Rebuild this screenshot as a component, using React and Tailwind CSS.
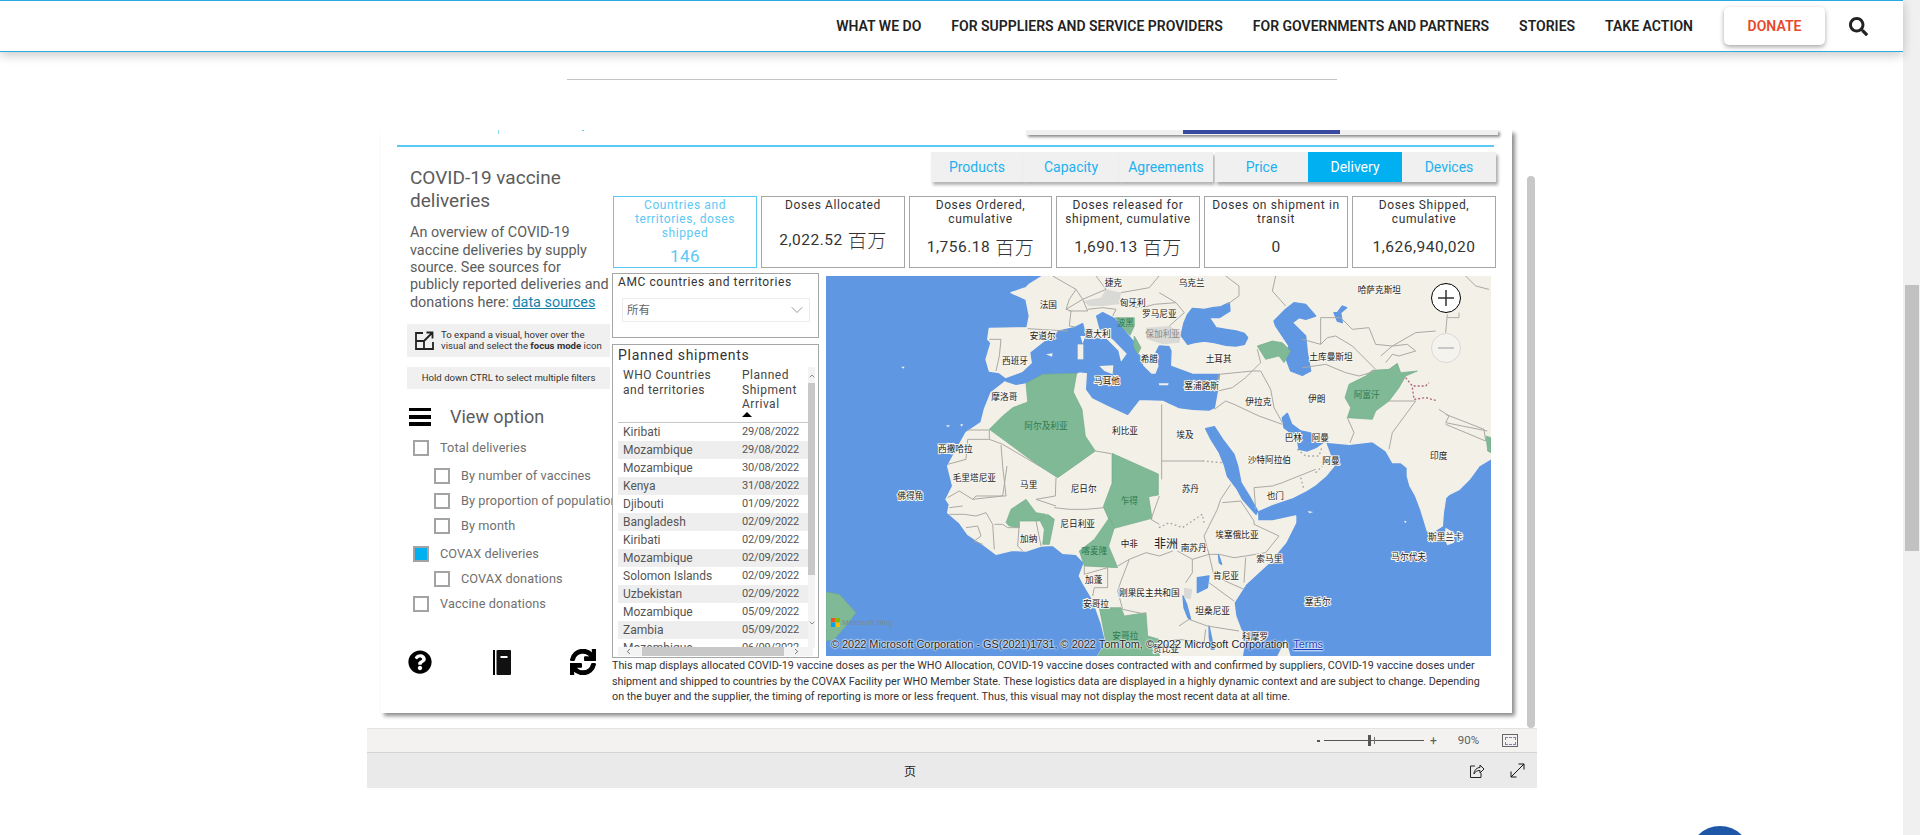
import React from 'react';
import { ChevronDown, ChevronUp, ChevronLeft, ChevronRight } from 'lucide-react';
import { FaSearch, FaQuestionCircle, FaSync } from 'react-icons/fa';

const navItems = [
  'WHAT WE DO',
  'FOR SUPPLIERS AND SERVICE PROVIDERS',
  'FOR GOVERNMENTS AND PARTNERS',
  'STORIES',
  'TAKE ACTION',
];

const shipments = [
  ['Kiribati', '29/08/2022'],
  ['Mozambique', '29/08/2022'],
  ['Mozambique', '30/08/2022'],
  ['Kenya', '31/08/2022'],
  ['Djibouti', '01/09/2022'],
  ['Bangladesh', '02/09/2022'],
  ['Kiribati', '02/09/2022'],
  ['Mozambique', '02/09/2022'],
  ['Solomon Islands', '02/09/2022'],
  ['Uzbekistan', '02/09/2022'],
  ['Mozambique', '05/09/2022'],
  ['Zambia', '05/09/2022'],
  ['Mozambique', '06/09/2022'],
];

// map traced at 3x, viewBox is 3 times the 665x380 map box
const land = '650,0 2000,0 2000,545 1959,570 1930,610 1900,640 1870,655 1859,665 1852,710 1849,750 1825,765 1804,765 1795,735 1784,700 1769,660 1752,630 1744,600 1744,575 1725,560 1700,560 1680,525 1640,497 1570,505 1498,498 1510,530 1524,570 1499,600 1470,625 1439,645 1399,665 1339,685 1294,705 1295,735 1340,735 1409,720 1409,740 1379,800 1329,860 1259,925 1224,980 1229,1020 1244,1060 1259,1080 1249,1140 815,1140 840,1100 825,1040 800,970 770,920 760,900 775,860 750,835 710,832 680,808 645,810 600,825 560,823 510,835 470,805 425,775 400,740 365,710 370,685 360,670 380,630 370,590 365,570 395,515 420,470 465,440 475,400 495,350 540,315 540,305 520,290 490,285 480,250 495,200 485,190 490,157 603,155 610,120 600,70 555,50 600,35 610,25';
const water = [
  '535,310 590,290 620,262 615,230 660,195 700,165 745,155 770,143 778,175 800,188 840,190 875,225 884,262 905,233 865,192 822,158 812,120 830,110 865,128 900,170 925,200 935,235 945,240 950,270 975,295 990,295 1000,270 990,230 1000,210 1029,212 1035,225 1033,270 1100,295 1180,295 1175,340 1165,395 1150,402 1100,400 1060,395 1010,372 940,370 905,415 850,390 800,365 782,340 785,290 760,287 750,292 650,295 600,320 570,325 540,315',
  '1074,140 1085,115 1099,97 1135,100 1160,95 1185,92 1210,80 1212,105 1180,125 1150,125 1170,155 1200,160 1230,165 1255,172 1265,185 1255,205 1230,210 1200,208 1165,200 1135,195 1105,200 1085,205 1065,178',
  '1344,135 1379,100 1404,80 1439,85 1469,120 1439,130 1419,125 1399,140 1439,180 1444,230 1454,285 1429,298 1394,285 1377,240 1389,210 1369,180 1349,150',
  '1524,110 1534,135 1549,140 1544,110 1562,95 1549,90 1534,110',
  '1139,458 1165,452 1190,490 1224,535 1235,570 1245,620 1270,660 1295,705 1290,715 1250,670 1234,640 1204,600 1196,570 1180,530 1155,490',
  '1369,425 1384,412 1397,445 1424,465 1449,470 1477,478 1495,497 1469,515 1444,525 1419,520 1414,490 1394,470 1374,455',
  '1114,905 1149,900 1144,935 1114,950',
  '1177,835 1187,865 1180,860',
  '1071,960 1082,985 1094,1030 1086,1025 1074,995',
  '1149,1050 1164,1120 1156,1120 1150,1085',
];
const islands = [
  '755,205 772,205 772,250 755,250',
  '763,180 778,180 770,203',
  '820,270 862,268 860,295 835,285',
  '660,235 680,232 678,242',
  '998,322 1028,322 1026,328 1000,328',
  '1078,320 1106,320 1098,334 1082,330',
  '1859,755 1884,770 1884,800 1864,808 1854,785',
  '1354,1140 1379,1090 1394,1140',
  '225,272 236,272 232,278',
  '360,448 372,448 366,454',
  '403,445 412,445 406,452',
  '1445,705 1462,708 1450,712',
  '1734,735 1742,735 1738,742',
];
const green = [
  '600,322 650,295 752,292 742,348 768,400 778,480 808,525 745,570 695,605 640,570 490,460 530,420 560,395 605,378',
  '858,532 997,594 997,657 968,662 978,727 865,757 845,722 832,692 858,622',
  '850,725 805,790 760,825 775,870 875,875 848,810 865,755',
  '540,740 555,700 600,670 630,710 660,715 640,735 580,735 580,755 550,750',
  '640,730 665,715 685,730 670,805 650,805 655,760',
  '868,125 925,125 925,150 912,178 890,155',
  '925,180 945,215 935,235 922,210',
  '1294,210 1339,195 1369,200 1394,225 1374,260 1359,240 1319,250',
  '1557,365 1569,325 1619,300 1639,283 1689,280 1714,262 1724,290 1774,285 1739,300 1719,335 1689,375 1649,405 1639,430 1564,425 1574,395',
  '820,995 885,995 895,1020 960,1010 965,1080 999,1090 1000,1140 815,1140 840,1100',
  '0,948 40,955 90,1010 60,1050 25,1090 0,1095',
  '1980,480 1995,485 1995,530 1985,525',
];
const grey = [
  '770,75 825,65 840,40 885,50 880,85 830,90 790,90',
  '960,155 1030,150 1066,170 1060,200 1010,205 965,190',
  '1074,935 1099,940 1094,970 1074,965',
];
const borders = [
  '490,190 525,190 520,240 510,285',
  '605,158 725,165',
  '680,0 750,40 730,70 720,100 735,105 730,150 745,152',
  '750,40 770,70 840,40 810,0',
  '720,100 770,70 785,105 730,105',
  '785,100 830,95 870,100 860,120',
  '885,50 970,35 999,0',
  '885,90 950,95 985,85 1050,80 1075,110 1030,150',
  '1000,50 1050,80',
  '1199,0 1239,30 1239,60 1204,85',
  '1349,0 1339,45 1379,90',
  '1179,295 1279,285 1304,260 1294,220',
  '1175,345 1219,335 1259,305 1279,285 1304,285 1334,340 1344,395 1369,440',
  '1165,400 1199,375 1224,385 1299,420 1369,445',
  '1429,275 1499,265 1559,290 1599,300 1649,285',
  '1484,205 1484,125 1544,125 1579,160 1629,155 1649,205 1699,210 1769,170 1829,165',
  '1429,190 1484,205 1504,185 1529,180 1579,210 1649,280',
  '1864,115 1859,170',
  '1864,125 1899,125 1899,110',
  '1919,0 1949,30 1989,40',
  '1664,240 1699,210 1744,205 1769,225 1719,240 1699,235 1679,260',
  '1564,425 1584,470 1572,500',
  '1689,375 1769,375 1699,470 1689,520',
  '1839,400 1869,420 1859,440 1984,465',
  '1859,415 1974,460 1979,495 1859,445',
  '425,462 490,462 490,490 425,490 420,550 365,565',
  '490,490 530,505 640,570',
  '525,507 530,570 540,660 450,660 440,670',
  '690,605 688,660 630,670',
  '1007,385 1007,610',
  '1007,555 1130,555',
  '808,525 856,533',
  '1000,660 975,730 1000,745',
  '1189,680 1244,675 1284,735 1284,745 1359,780 1319,830 1259,840 1224,845 1179,835 1149,835 1099,850 1054,825',
  '1214,625 1184,670 1174,700 1134,780 1149,835',
  '1149,835 1164,900 1254,940',
  '1259,845 1254,920',
  '1099,850 1099,890 1079,920',
  '1149,920 1224,975',
  '1059,1050 1089,1030 1144,1050 1239,1065',
  '999,1100 1059,1090 1134,1100 1139,1060',
  '910,850 885,915 875,945 890,1000 960,1015',
  '875,870 910,850 960,830 1000,840 1040,825',
  '775,870 775,895 845,875 845,935 805,935 800,960',
  '685,695 730,700 780,700 835,695',
  '365,665 400,645 440,670 530,660 543,570',
  '370,695 410,690',
  '370,715 415,715 450,720 480,710 500,745 505,820',
  '505,745 530,745 545,755 580,755',
  '580,740 575,810 590,825',
  '630,735 645,810',
  '420,755 455,750 465,780 445,795 470,805',
  '690,690 630,670',
  '1284,635 1339,630 1369,620 1469,580',
  '1284,635 1289,700',
  '1179,295 1175,320',
];
const dotted = [
  '1130,555 1190,560',
  '999,755 1029,740 1069,755 1129,715 1134,740',
  '1414,520 1439,540 1479,540 1489,510',
  '1469,590 1489,570',
  '1424,605 1434,640',
];
const redDotted = ['1739,305 1759,330 1799,330 1809,320', '1759,335 1764,370 1800,365 1835,375'];

const labels = [
  ['捷克', 862, 18], ['法国', 667, 85], ['匈牙利', 920, 77], ['罗马尼亚', 1000, 110], ['安道尔', 650, 177],
  ['意大利', 815, 170], ['西班牙', 567, 252], ['希腊', 970, 247], ['马耳他', 843, 312], ['摩洛哥', 535, 360],
  ['利比亚', 897, 462], ['西撒哈拉', 388, 517], ['乌克兰', 1097, 18], ['哈萨克斯坦', 1660, 40], ['土耳其', 1178, 247],
  ['土库曼斯坦', 1515, 240], ['塞浦路斯', 1127, 328], ['伊拉克', 1297, 375], ['伊朗', 1472, 365], ['埃及', 1077, 473],
  ['巴林', 1402, 483], ['阿曼', 1483, 483], ['沙特阿拉伯', 1330, 548], ['阿曼', 1515, 553], ['印度', 1838, 538],
  ['毛里塔尼亚', 445, 603], ['马里', 608, 623], ['尼日尔', 773, 635], ['佛得角', 253, 657], ['尼日利亚', 755, 742],
  ['加纳', 608, 785], ['中非', 910, 802], ['加蓬', 803, 910], ['刚果民主共和国', 970, 948], ['安哥拉', 810, 980],
  ['苏丹', 1093, 635], ['也门', 1348, 657], ['埃塞俄比亚', 1233, 775], ['南苏丹', 1103, 812], ['索马里', 1330, 845],
  ['斯里兰卡', 1858, 780], ['马尔代夫', 1748, 840], ['肯尼亚', 1200, 898], ['塞舌尔', 1475, 975], ['坦桑尼亚', 1160, 1002],
  ['科摩罗', 1287, 1080], ['赞比亚', 1020, 1115],
];
const greenLabels = [
  ['波黑', 898, 138], ['阿尔及利亚', 660, 447], ['阿富汗', 1622, 353], ['乍得', 910, 672], ['喀麦隆', 805, 823], ['安哥拉', 898, 1077],
];

const WorldMap = () => (
  <svg viewBox="0 0 1995 1140" className="absolute inset-0 w-full h-full" preserveAspectRatio="none">
    <rect width="1995" height="1140" fill="#5f97e2" />
    <polygon points={land} fill="#f3f0e8" stroke="#f3f0e8" strokeWidth="4" strokeLinejoin="round" />
    {water.map((p, i) => <polygon key={i} points={p} fill="#5f97e2" stroke="#5f97e2" strokeWidth="4" strokeLinejoin="round" />)}
    {islands.map((p, i) => <polygon key={i} points={p} fill="#f3f0e8" />)}
    {grey.map((p, i) => <polygon key={i} points={p} fill="#d9d9d6" />)}
    {green.map((p, i) => <polygon key={i} points={p} fill="#7fb995" stroke="#72ab89" strokeWidth="2" strokeLinejoin="round" />)}
    {borders.map((p, i) => <polyline key={i} points={p} fill="none" stroke="#aaa9a3" strokeWidth="3" strokeLinejoin="round" />)}
    {dotted.map((p, i) => <polyline key={i} points={p} fill="none" stroke="#a3a29c" strokeWidth="4" strokeDasharray="5 8" />)}
    {redDotted.map((p, i) => <polyline key={i} points={p} fill="none" stroke="#b4667a" strokeWidth="4" strokeDasharray="6 6" />)}
    <g fontFamily="'Noto Sans CJK SC', sans-serif" fontSize="26" textAnchor="middle" dominantBaseline="central">
      {labels.map(([t, x, y], i) => (
        <text key={i} x={x} y={y} fill="#222" stroke="#f7f5ef" strokeWidth="6" paintOrder="stroke">{t}</text>
      ))}
      {greenLabels.map(([t, x, y], i) => (
        <text key={i} x={x} y={y} fill="#2f7a52">{t}</text>
      ))}
      <text x="1020" y="798" fontSize="36" fill="#222" stroke="#f7f5ef" strokeWidth="6" paintOrder="stroke">非洲</text>
      <text x="1010" y="170" fill="#8a8a8a">保加利亚</text>
    </g>
    <g>
      <rect x="15" y="1026" width="13" height="13" fill="#f25022" />
      <rect x="29" y="1026" width="13" height="13" fill="#7fba00" />
      <rect x="15" y="1040" width="13" height="13" fill="#00a4ef" />
      <rect x="29" y="1040" width="13" height="13" fill="#ffb900" />
      <text x="48" y="1040" fontSize="24" fill="#7f8a90" dominantBaseline="central" fontFamily="'Liberation Sans', sans-serif">Microsoft Bing</text>
    </g>
  </svg>
);

const Checkbox = ({ checked }) => (
  <span className={`w-[16px] h-[16px] shrink-0 border-2 border-[#a3a3a3] ${checked ? 'bg-[#00b0f0]' : 'bg-white'}`} />
);

const OptionRow = ({ label, checked, className }) => (
  <div className={`h-[20px] flex items-center whitespace-nowrap ${className}`}>
    <Checkbox checked={checked} />
    <span className="ml-[11px] text-[12.7px] leading-[20px] tracking-[0.1px] text-[#707070]">{label}</span>
  </div>
);

const KpiCard = ({ title, value, unit, active, className }) => (
  <div className={`h-[72px] border flex flex-col items-center px-[4px] pt-[1px] text-center ${active ? 'border-[#5bc8f5] text-[#5bc8f5]' : 'border-[#a6a6a6] text-[#333]'} ${className}`}>
    <div className="text-[12px] leading-[14px] tracking-[0.6px]">{title}</div>
    <div className="flex-1 pt-[2px] flex items-center justify-center text-[15.5px] tracking-[0.5px]">
      {value}
      {unit && <span className="ml-[5px] text-[19px] font-['Noto_Sans_CJK_SC',sans-serif] font-light">{unit}</span>}
    </div>
  </div>
);

const TabButton = ({ label, active, className }) => (
  <div className={`h-full flex items-center justify-center text-[14px] ${active ? 'bg-[#00b0f0] text-white' : 'bg-[#f0f0f0] text-[#1eb1ee]'} ${className}`}>
    {label}
  </div>
);

const App = () => {
  return (
    <div className="relative w-full h-[835px] overflow-hidden bg-white flex font-['Roboto',sans-serif]">
      <div className="flex-1 min-w-0 flex flex-col">
        {/* site header */}
        <header className="relative z-10 h-[52px] shrink-0 bg-white border-t border-b border-[#29abe2] shadow-[0_3px_10px_rgba(0,0,0,0.22)] flex items-center justify-end pr-[35px]">
          <nav className="flex items-center gap-[30px] text-[14px] font-semibold text-[#222]">
            {navItems.map((item) => <span key={item} className="whitespace-nowrap">{item}</span>)}
          </nav>
          <div className="ml-[31px] w-[101px] h-[38px] rounded-[5px] bg-white shadow-[0_2px_5px_rgba(0,0,0,0.35)] flex items-center justify-center text-[14px] font-semibold text-[#e8472a]">
            DONATE
          </div>
          <FaSearch className="ml-[24px] text-[#222]" size={19} />
        </header>

        <div className="mt-[27px] ml-[567px] w-[770px] h-px shrink-0 bg-[#c4c4c4]" />

        {/* embedded report */}
        <div className="mt-[50px] ml-[367px] w-[1170px] shrink-0">
          <div className="h-[598px] flex overflow-hidden">
            <div className="ml-[14px] w-[1131px] h-[583px] bg-white shadow-[3px_3px_4px_rgba(0,0,0,0.45)] flex flex-col">
              {/* clipped strip of the section above */}
              <div className="h-[5px] shrink-0 flex">
                <div className="ml-[117px] w-px h-[4px] bg-[#8fd8f7]" />
                <div className="ml-[83px] w-[2px] h-[1px] bg-[#5bc8f5]" />
                <div className="ml-[442px] w-[472px] h-[5px] bg-[#f0f0f0] shadow-[2px_2px_3px_rgba(0,0,0,0.45)] flex">
                  <div className="ml-[157px] w-[157px] h-[4px] bg-[#3949a0]" />
                </div>
              </div>
              <div className="mt-[10px] ml-[16px] w-[1097px] h-[2px] shrink-0 bg-[#5bc8f5]" />

              <div className="flex-1 flex min-h-0">
                {/* left column */}
                <div className="ml-[26px] w-[205px] shrink-0 overflow-hidden">
                  <div className="mt-[20px] pl-[3px] text-[19px] leading-[22.7px] text-[#5c5c5c]">
                    COVID-19 vaccine<br />deliveries
                  </div>
                  <div className="mt-[12px] pl-[3px] text-[14.4px] leading-[17.3px] text-[#5c5c5c] whitespace-nowrap">
                    An overview of COVID-19<br />
                    vaccine deliveries by supply<br />
                    source. See sources for<br />
                    publicly reported deliveries and<br />
                    donations here: <span className="text-[#1582ab] underline">data sources</span>
                  </div>
                  <div className="mt-[13px] w-[203px] h-[33px] bg-[#f0f0f0] flex items-center pl-[8px]">
                    <svg width="19" height="19" viewBox="0 0 19 19" fill="none" stroke="#222" strokeWidth="1.8">
                      <path d="M8 2H1v16h17v-7" />
                      <path d="M1 10h8v8" />
                      <path d="M9 10 L17.5 1.5M11.5 1.5h6v6" />
                    </svg>
                    <div className="ml-[7px] text-[9.6px] leading-[11.5px] text-[#333] whitespace-nowrap">
                      To expand a visual, hover over the<br />
                      visual and select the <b>focus mode</b> icon
                    </div>
                  </div>
                  <div className="mt-[10px] w-[203px] h-[22px] bg-[#f0f0f0] flex items-center justify-center text-[9.65px] text-[#333] whitespace-nowrap">
                    Hold down CTRL to select multiple filters
                  </div>

                  <div className="mt-[18px] h-[20px] flex items-center">
                    <div className="ml-[2px] w-[22px] h-[18px] flex flex-col justify-between">
                      <div className="h-[3.5px] bg-black" />
                      <div className="h-[3.5px] bg-black" />
                      <div className="h-[3.5px] bg-black" />
                    </div>
                    <span className="ml-[19px] text-[18px] leading-[21px] text-[#5c5c5c]">View option</span>
                  </div>

                  <OptionRow label="Total deliveries" className="mt-[11px] ml-[6px]" />
                  <OptionRow label="By number of vaccines" className="mt-[8px] ml-[27px]" />
                  <OptionRow label="By proportion of population" className="mt-[5px] ml-[27px]" />
                  <OptionRow label="By month" className="mt-[5px] ml-[27px]" />
                  <OptionRow label="COVAX deliveries" checked className="mt-[8px] ml-[6px]" />
                  <OptionRow label="COVAX donations" className="mt-[5px] ml-[27px]" />
                  <OptionRow label="Vaccine donations" className="mt-[5px] ml-[6px]" />

                  <div className="mt-[36px] h-[25px] flex items-center">
                    <FaQuestionCircle className="ml-[1px] text-black" size={24} />
                    <svg className="ml-[61px]" width="18" height="25" viewBox="0 0 18 25">
                      <rect x="0" y="0" width="2" height="25" fill="#000" />
                      <rect x="3.5" y="0" width="14.5" height="25" rx="1" fill="#111" />
                      <rect x="7.5" y="6" width="7" height="2" fill="#fff" />
                    </svg>
                    <FaSync className="ml-[59px] text-black" size={26} stroke="#000" strokeWidth={25} />
                  </div>
                </div>

                {/* right column */}
                <div className="w-[884px] shrink-0">
                  <div className="mt-[5px] ml-[319px] h-[30px] flex">
                    <TabButton label="Products" className="w-[92px] shadow-[2px_3px_3px_rgba(0,0,0,0.3)]" />
                    <TabButton label="Capacity" className="w-[96px] shadow-[2px_3px_3px_rgba(0,0,0,0.3)]" />
                    <TabButton label="Agreements" className="w-[94px] shadow-[2px_3px_3px_rgba(0,0,0,0.3)]" />
                    <div className="ml-[2px] flex h-full shadow-[2px_3px_3px_rgba(0,0,0,0.35)]">
                      <TabButton label="Price" className="w-[93px]" />
                      <TabButton label="Delivery" active className="w-[94px]" />
                      <TabButton label="Devices" className="w-[94px]" />
                    </div>
                  </div>

                  <div className="mt-[14px] ml-[1px] flex gap-[4px]">
                    <KpiCard active title={<>Countries and territories, doses shipped</>} value={<span className="mt-[2px] text-[17px]">146</span>} className="w-[144px]" />
                    <KpiCard title="Doses Allocated" value="2,022.52" unit="百万" className="w-[144px]" />
                    <KpiCard title="Doses Ordered, cumulative" value="1,756.18" unit="百万" className="w-[143px]" />
                    <KpiCard title="Doses released for shipment, cumulative" value="1,690.13" unit="百万" className="w-[144px]" />
                    <KpiCard title="Doses on shipment in transit" value="0" className="w-[144px]" />
                    <KpiCard title="Doses Shipped, cumulative" value="1,626,940,020" className="w-[144px]" />
                  </div>

                  <div className="mt-[4px] h-[386px] flex">
                    <div className="w-[207px] shrink-0 flex flex-col">
                      {/* AMC slicer */}
                      <div className="mt-[1px] h-[65px] border border-[#a6a6a6] px-[5px] pt-[1px]">
                        <div className="text-[12px] leading-[15px] tracking-[0.6px] text-[#333]">AMC countries and territories</div>
                        <div className="mt-[8px] ml-[4px] w-[188px] h-[24px] border border-[#ececec] flex items-center justify-between pl-[4px] pr-[2px]">
                          <span className="text-[11.5px] text-[#666] font-['Noto_Sans_CJK_SC',sans-serif]">所有</span>
                          <ChevronDown size={20} strokeWidth={0.9} className="text-[#777]" />
                        </div>
                      </div>
                      {/* planned shipments table */}
                      <div className="relative mt-[6px] h-[314px] border border-[#a6a6a6] overflow-hidden">
                        <div className="pl-[5px] pt-[1px] text-[14px] leading-[18px] tracking-[0.7px] text-[#333]">Planned shipments</div>
                        <div className="ml-[5px] mt-[2px] pt-[2px] w-[190px] h-[57px] border-b border-[#c8c8c8] flex text-[12px] leading-[14.5px] tracking-[0.5px] text-[#444]">
                          <div className="pl-[5px] w-[124px]">WHO Countries<br />and territories</div>
                          <div>
                            Planned<br />Shipment<br />Arrival
                            <div className="w-0 h-0 border-x-[5px] border-x-transparent border-b-[5px] border-b-black" />
                          </div>
                        </div>
                        <div className="ml-[5px] w-[190px] h-[225px] overflow-hidden">
                          {shipments.map(([country, date], i) => (
                            <div key={i} className={`h-[18px] flex items-center text-[#555] whitespace-nowrap ${i % 2 === 1 ? 'bg-[#eeeeee]' : ''}`}>
                              <span className="pl-[5px] w-[124px] text-[12px]">{country}</span>
                              <span className="text-[11px] tracking-[-0.15px]">{date}</span>
                            </div>
                          ))}
                        </div>
                        {/* scroll bars */}
                        <div className="absolute left-[195px] top-[22px] w-[7px] h-[281px] bg-[#f3f3f3] flex flex-col items-center">
                          <ChevronUp size={8} className="mt-[5px] text-[#555]" />
                          <div className="mt-[3px] w-full h-[192px] bg-[#c8c8c8]" />
                          <ChevronDown size={8} className="mt-[44px] text-[#555]" />
                        </div>
                        <div className="absolute left-[5px] top-[302px] w-[195px] h-[9px] bg-[#f3f3f3] flex items-center">
                          <ChevronLeft size={9} className="ml-[6px] text-[#444]" />
                          <div className="ml-[9px] w-[142px] h-full bg-[#c8c8c8]" />
                          <ChevronRight size={9} className="ml-[8px] text-[#444]" />
                        </div>
                      </div>
                    </div>

                    {/* map */}
                    <div className="relative mt-[4px] ml-[7px] w-[665px] h-[380px] overflow-hidden">
                      <WorldMap />
                      <div className="absolute left-[5px] bottom-[4px] flex items-center whitespace-nowrap text-[10.9px] leading-[16px] font-['Liberation_Sans',sans-serif] text-[#222] [text-shadow:0_0_2px_#fff,0_0_2px_#fff,0_0_2px_#fff]">
                        © 2022 Microsoft Corporation - GS(2021)1731, © 2022 TomTom, © 2022 Microsoft Corporation
                        <span className="ml-[5px] text-[#1b3fbf] underline">Terms</span>
                      </div>
                      <div className="absolute left-[605px] top-[7px] w-[30px] h-[30px] rounded-full bg-white border border-black flex items-center justify-center">
                        <svg width="16" height="16" viewBox="0 0 16 16" stroke="#333" strokeWidth="1.5"><path d="M8 0v16M0 8h16" /></svg>
                      </div>
                      <div className="absolute left-[605px] top-[57px] w-[30px] h-[30px] rounded-full bg-[#f4f3ee] border border-[#d8d8d8] flex items-center justify-center">
                        <svg width="16" height="2" viewBox="0 0 16 2" stroke="#c8c8c8" strokeWidth="2"><path d="M0 1h16" /></svg>
                      </div>
                    </div>
                  </div>

                  <div className="text-[10.75px] leading-[15.5px] text-[#333] whitespace-nowrap">
                    This map displays allocated COVID-19 vaccine doses as per the WHO Allocation, COVID-19 vaccine doses contracted with and confirmed by suppliers, COVID-19 vaccine doses under<br />
                    shipment and shipped to countries by the COVAX Facility per WHO Member State. These logistics data are displayed in a highly dynamic context and are subject to change. Depending<br />
                    on the buyer and the supplier, the timing of reporting is more or less frequent. Thus, this visual may not display the most recent data at all time.
                  </div>
                </div>
              </div>
            </div>
            <div className="ml-[15px] mt-[46px] w-[8px] h-[552px] rounded-t-[4px] rounded-b-[4px] bg-[#c8c8c8]" />
          </div>

          {/* zoom bar */}
          <div className="h-[24px] bg-[#f3f2f1] border-t border-[#e2e2e2] flex items-center text-[#605e5c]">
            <div className="ml-[950px] w-[3px] h-[2px] bg-[#555]" />
            <div className="relative ml-[4px] w-[100px] h-px bg-[#555]">
              <div className="absolute left-[44px] top-[-5px] w-[3px] h-[11px] bg-[#555]" />
              <div className="absolute left-[50px] top-[-3px] w-px h-[7px] bg-[#777]" />
            </div>
            <span className="ml-[6px] text-[12px]">+</span>
            <span className="ml-[21px] text-[11.5px]">90%</span>
            <div className="ml-[23px] w-[16px] h-[13px] border border-[#666] flex items-center justify-center">
              <div className="w-[11px] h-[8px] border border-dashed border-[#8080b0]" />
            </div>
          </div>
          {/* page bar */}
          <div className="h-[36px] bg-[#eaeaea] border-t border-[#d4d4d4] flex items-center">
            <span className="ml-[537px] w-[14px] text-[12px] text-[#222] font-['Noto_Sans_CJK_SC',sans-serif]">页</span>
            <svg className="ml-[551px]" width="16" height="16" viewBox="0 0 16 16" fill="none" stroke="#222" strokeWidth="1">
              <path d="M6 3H1.5v11.5H12V10" />
              <path d="M5 11c0-4 3-6.5 6-6.5V2l4 4-4 4V7.5c-3 0-5 1-6 3.5z" />
            </svg>
            <svg className="ml-[25px]" width="15" height="15" viewBox="0 0 15 15" fill="none" stroke="#111" strokeWidth="1">
              <path d="M1 14 14 1M8.5 1H14v5.5M1 8.5V14h5.5" />
            </svg>
          </div>
        </div>
      </div>

      {/* page scrollbar */}
      <div className="w-[17px] shrink-0 bg-[#f0f0f0]">
        <div className="mt-[285px] ml-[2px] w-[14px] h-[266px] bg-[#c1c1c1]" />
      </div>

      {/* floating round button, cut by the window */}
      <div className="absolute left-[1689px] top-[826px] w-[62px] h-[62px] rounded-full bg-[#1f57a8]" />
    </div>
  );
};

export default App;
